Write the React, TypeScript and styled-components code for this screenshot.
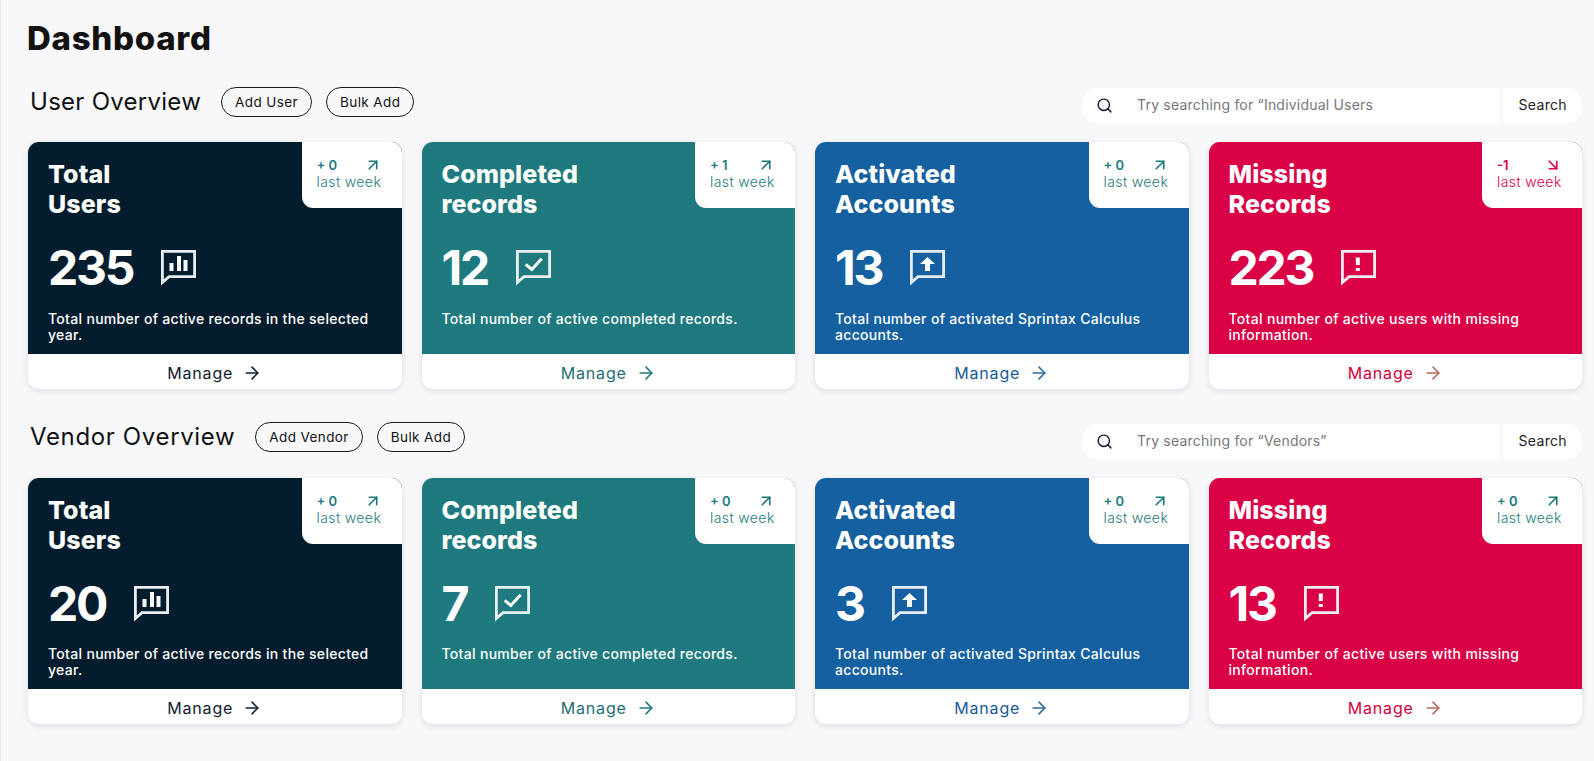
import React from 'react'
import styled, { createGlobalStyle } from 'styled-components'
import { ArrowRight, ArrowUpRight, ArrowDownRight, Search } from 'lucide-react'

const FONT = `Inter, "Noto Sans", "Liberation Sans", sans-serif`

const GlobalStyle = createGlobalStyle`
  html, body {
    margin: 0;
    padding: 0;
    background: #f8f8fb;
    font-family: ${FONT};
  }
`

const Page = styled.main`
  box-sizing: border-box;
  width: 1594px;
  height: 761px;
  overflow: hidden;
  padding: 18px 12px 0 27px;
  border-left: 1px solid #e6e6e8;
  color: #111111;
`

const Title = styled.h1`
  margin: 0 0 29px -1px;
  font-size: 33px;
  line-height: 40px;
  font-weight: 800;
  letter-spacing: 0.7px;
  color: #121212;
`

const SectionHead = styled.div`
  display: flex;
  align-items: flex-start;
  height: 30px;
  margin-bottom: 25px;
`

const SectionTitle = styled.h2`
  margin: 0 20px 0 2px;
  font-size: 24px;
  line-height: 30px;
  font-weight: 400;
  letter-spacing: 0.27px;
`

const PillButton = styled.button`
  box-sizing: border-box;
  height: 30px;
  margin-right: 14px;
  padding: 0 13px;
  border: 1px solid #1c1c1c;
  border-radius: 15px;
  background: transparent;
  font-family: ${FONT};
  font-size: 13.5px;
  font-weight: 400;
  letter-spacing: 0.4px;
  color: #111111;
`

const SearchBar = styled.div`
  display: flex;
  flex: none;
  align-items: center;
  width: 500px;
  height: 36px;
  margin: 1px 0 0 auto;
  border-radius: 18px;
  background: #ffffff;
`

const SearchIcon = styled.span`
  display: flex;
  width: 55px;
  margin-bottom: 2px;
  padding-left: 14px;
  box-sizing: border-box;
  color: #12123a;
`

const SearchText = styled.span`
  flex: 1;
  margin-bottom: 3px;
  font-size: 14px;
  letter-spacing: 0.2px;
  color: #77777a;
`

const SearchAction = styled.span`
  display: flex;
  align-items: center;
  box-sizing: border-box;
  height: 100%;
  padding: 0 15px 3px 16px;
  border-left: 2px solid #f8f8fb;
  font-size: 14px;
  letter-spacing: 0.35px;
  color: #222222;
`

const CardGrid = styled.div`
  display: grid;
  grid-template-columns: repeat(4, 1fr);
  gap: 20px;
`

const Card = styled.article`
  display: flex;
  flex-direction: column;
  overflow: hidden;
  height: 247px;
  border-radius: 11px;
  background: #ffffff;
  box-shadow: 0 2px 6px rgba(30, 30, 50, 0.12);
`

const Description = styled.p`
  margin: 0;
  font-size: 14px;
  line-height: 16px;
  font-weight: 500;
  letter-spacing: 0.31px;
`

const Section = styled.section`
  margin-bottom: 33px;

  & + & ${SectionHead} {
    margin-bottom: 26px;
  }

  & + & ${SectionTitle} {
    letter-spacing: 0.64px;
  }

  & + & ${SearchBar} {
    margin-top: 2px;
  }

  & + & ${Card} {
    height: 246px;
  }

  & + & ${Description} {
    margin-top: -1px;
  }
`

const CardBody = styled.div<{ $bg: string }>`
  position: relative;
  flex: 1;
  box-sizing: border-box;
  padding: 17px 20px 0;
  background: ${p => p.$bg};
  color: #ffffff;
`

const CardTitle = styled.h3`
  margin: 0 0 24px;
  font-size: 25px;
  line-height: 30px;
  font-weight: 800;
  letter-spacing: 0.1px;
`

const Metric = styled.div`
  display: flex;
  align-items: center;
  height: 50px;
  margin-bottom: 18px;
`

const MetricValue = styled.span`
  margin-right: 28px;
  font-size: 48px;
  line-height: 50px;
  font-weight: 700;
  letter-spacing: -2.2px;
`

const Badge = styled.div<{ $color: string }>`
  position: absolute;
  top: 0;
  right: 0;
  box-sizing: border-box;
  width: 100px;
  height: 66px;
  padding: 15px 0 0 15px;
  border-bottom-left-radius: 11px;
  background: #ffffff;
  color: ${p => p.$color};
`

const BadgeTop = styled.div`
  display: flex;
  align-items: center;
  justify-content: space-between;
  width: 65px;
  height: 16px;
  font-size: 13px;
  font-weight: 600;
`

const BadgeLabel = styled.div`
  margin-top: 1px;
  font-size: 14px;
  line-height: 16px;
  font-weight: 300;
  letter-spacing: 0.4px;
`

const CardFooter = styled.a<{ $color: string; $arrow: string }>`
  display: flex;
  flex: none;
  align-items: center;
  justify-content: center;
  box-sizing: border-box;
  gap: 9px;
  height: 35px;
  padding-top: 2px;
  font-size: 16px;
  letter-spacing: 0.8px;
  color: ${p => p.$color};

  svg {
    color: ${p => p.$arrow};
  }
`

type Kind = 'chart' | 'check' | 'upload' | 'alert'

const BubbleIcon = ({ kind }: { kind: Kind }) => (
  <svg width="36" height="36" viewBox="0 0 36 36" fill="none">
    <path d="M1.4 1.4H33.6V26.6H8L1.4 32.4Z" stroke="#e9eef2" strokeWidth="2.8" />
    {kind === 'chart' && (
      <path d="M10.5 13V21M18 6V21M24.5 10V21" stroke="#fff" strokeWidth="4" />
    )}
    {kind === 'check' && (
      <path d="M9.7 14.3L15.8 19.5L25.7 8.7" stroke="#fff" strokeWidth="3" />
    )}
    {kind === 'upload' && <path d="M17.5 7L25 14H20V21H15V14H10Z" fill="#fff" />}
    {kind === 'alert' && (
      <path d="M16.8 7.5V15M16.8 18V21" stroke="#fff" strokeWidth="4" />
    )}
  </svg>
)

const TEAL = '#1d7a7e'

const tones = {
  navy: { bg: '#031d2e', title: 'Total', title2: 'Users', kind: 'chart', footer: '#10202e', arrow: '#10202e', desc: 'Total number of active records in the selected year.' },
  teal: { bg: '#1e7a7e', title: 'Completed', title2: 'records', kind: 'check', footer: '#1e6e76', arrow: '#1e7a7e', desc: 'Total number of active completed records.' },
  blue: { bg: '#1460a0', title: 'Activated', title2: 'Accounts', kind: 'upload', footer: '#1a5a98', arrow: '#2a6aa0', desc: 'Total number of activated Sprintax Calculus accounts.' },
  red: { bg: '#da0046', title: 'Missing', title2: 'Records', kind: 'alert', footer: '#d2003f', arrow: '#b5685f', desc: 'Total number of active users with missing information.' },
} as const

type CardData = { tone: keyof typeof tones; value: number; delta: string; down?: boolean }

const StatCard = ({ tone, value, delta, down }: CardData) => {
  const t = tones[tone]
  const badgeColor = down ? '#da0046' : TEAL
  return (
    <Card>
      <CardBody $bg={t.bg}>
        <CardTitle>
          {t.title}
          <br />
          {t.title2}
        </CardTitle>
        <Metric>
          <MetricValue>{value}</MetricValue>
          <BubbleIcon kind={t.kind} />
        </Metric>
        <Description>{t.desc}</Description>
        <Badge $color={badgeColor}>
          <BadgeTop>
            <span>{delta}</span>
            {down ? <ArrowDownRight size={18} strokeWidth={2.2} /> : <ArrowUpRight size={18} strokeWidth={2.2} />}
          </BadgeTop>
          <BadgeLabel>last week</BadgeLabel>
        </Badge>
      </CardBody>
      <CardFooter $color={t.footer} $arrow={t.arrow}>
        Manage
        <ArrowRight size={20} strokeWidth={1.9} />
      </CardFooter>
    </Card>
  )
}

const sections = [
  {
    title: 'User Overview',
    buttons: ['Add User', 'Bulk Add'],
    placeholder: 'Try searching for “Individual Users',
    cards: [
      { tone: 'navy', value: 235, delta: '+ 0' },
      { tone: 'teal', value: 12, delta: '+ 1' },
      { tone: 'blue', value: 13, delta: '+ 0' },
      { tone: 'red', value: 223, delta: '-1', down: true },
    ] as CardData[],
  },
  {
    title: 'Vendor Overview',
    buttons: ['Add Vendor', 'Bulk Add'],
    placeholder: 'Try searching for “Vendors”',
    cards: [
      { tone: 'navy', value: 20, delta: '+ 0' },
      { tone: 'teal', value: 7, delta: '+ 0' },
      { tone: 'blue', value: 3, delta: '+ 0' },
      { tone: 'red', value: 13, delta: '+ 0' },
    ] as CardData[],
  },
]

export default function App() {
  return (
    <Page>
      <GlobalStyle />
      <Title>Dashboard</Title>
      {sections.map(s => (
        <Section key={s.title}>
          <SectionHead>
            <SectionTitle>{s.title}</SectionTitle>
            {s.buttons.map(b => (
              <PillButton key={b}>{b}</PillButton>
            ))}
            <SearchBar>
              <SearchIcon>
                <Search size={17} strokeWidth={2} />
              </SearchIcon>
              <SearchText>{s.placeholder}</SearchText>
              <SearchAction>Search</SearchAction>
            </SearchBar>
          </SectionHead>
          <CardGrid>
            {s.cards.map(c => (
              <StatCard key={c.tone} {...c} />
            ))}
          </CardGrid>
        </Section>
      ))}
    </Page>
  )
}
